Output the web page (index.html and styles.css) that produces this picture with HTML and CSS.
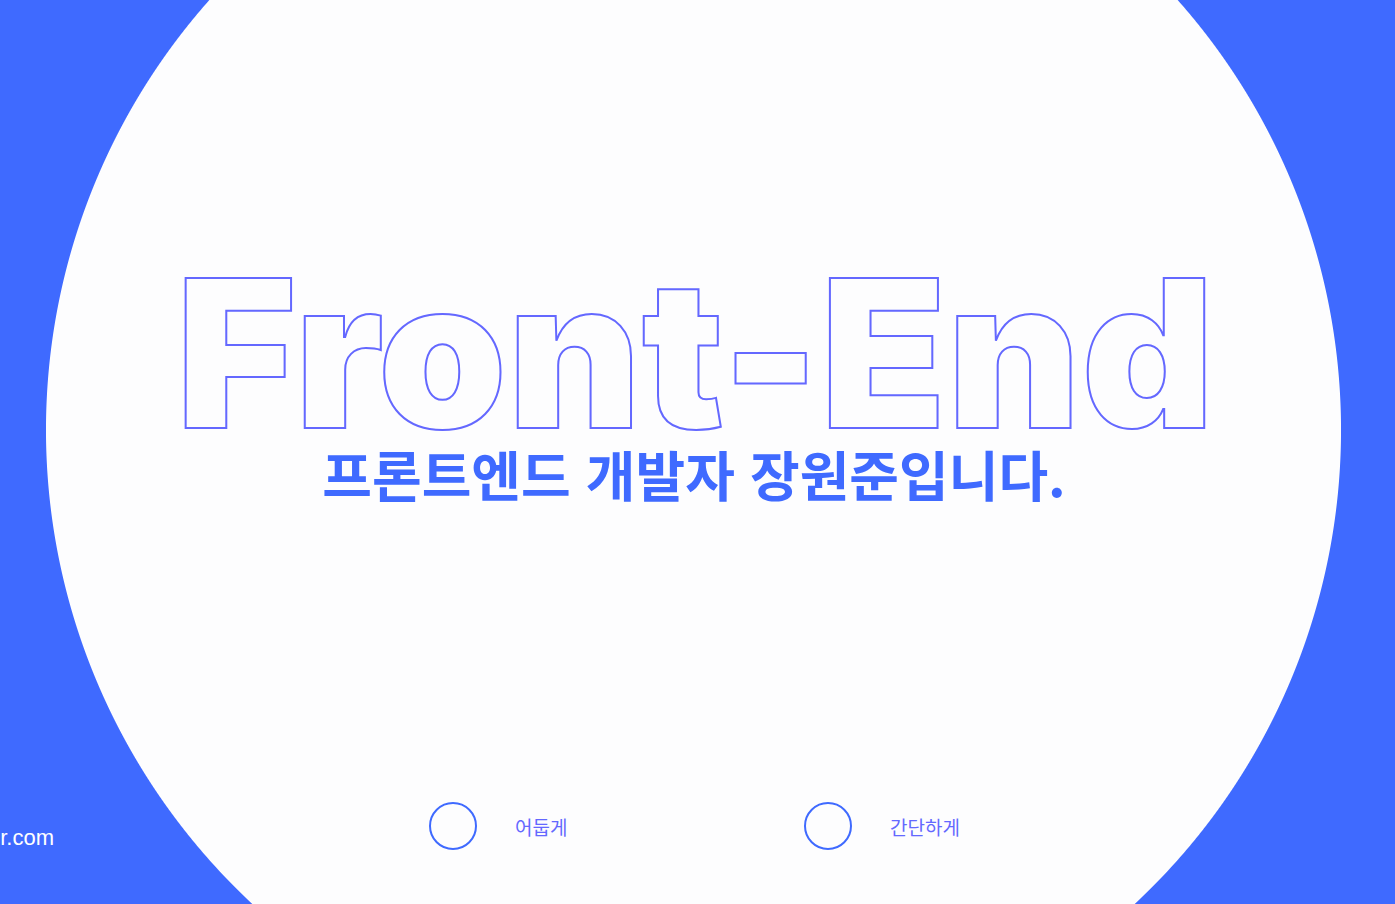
FILE: index.html
```html
<!DOCTYPE html>
<html lang="ko">
<head>
<meta charset="utf-8">
<title>Front-End</title>
<link rel="stylesheet" href="styles.css">
</head>
<body>
<main class="page">
  <section class="hero">
    <h1 class="title">Front-End</h1>
    <p class="subtitle">프론트엔드 개발자 장원준입니다.</p>
  </section>
  <footer class="footer">
    <div class="contact"><span class="email">wonjun@naver.com</span></div>
    <div class="options">
      <label class="option"><span class="radio"></span><span class="option-label">어둡게</span></label>
      <label class="option"><span class="radio"></span><span class="option-label">간단하게</span></label>
    </div>
  </footer>
</main>
</body>
</html>
```

FILE: styles.css
```css
html, body {
  margin: 0;
  padding: 0;
  height: 100%;
}
body {
  background: radial-gradient(circle 648px at 693.5px 430px, #fdfdfe 99.85%, #3f6aff 100%);
  background-color: #3f6aff;
  overflow: hidden;
  font-family: "Noto Sans CJK KR", "Noto Sans", sans-serif;
}
.page {
  width: 1395px;
  height: 904px;
  display: flex;
  flex-direction: column;
}
.hero {
  display: flex;
  flex-direction: column;
  align-items: center;
  padding-top: 265px;
}
.title {
  margin: 0;
  font-family: Inter, "Noto Sans", sans-serif;
  font-weight: 900;
  font-size: 206px;
  line-height: 177px;
  letter-spacing: 0.6px;
  color: transparent;
  -webkit-text-stroke: 2px #6468ff;
  padding-right: 4px;
}
.subtitle {
  margin: 0;
  font-family: "Noto Sans CJK KR", sans-serif;
  font-weight: 700;
  font-size: 54px;
  line-height: 1.2;
  color: #3f6aff;
  padding-right: 7px;
}
.footer {
  margin-top: auto;
  display: flex;
  align-items: flex-start;
  height: 48px;
  padding-bottom: 54px;
}
.contact {
  width: 54px;
  display: flex;
  justify-content: flex-end;
  padding-top: 23px;
}
.email {
  white-space: nowrap;
  font-family: "Liberation Sans", Arial, sans-serif;
  font-size: 22px;
  line-height: 25px;
  color: #ffffff;
}
.options {
  display: flex;
  margin-left: 375px;
}
.option {
  display: flex;
  align-items: center;
  width: 375px;
  height: 48px;
}
.radio {
  width: 44px;
  height: 44px;
  border: 2px solid #3f6aff;
  border-radius: 50%;
  box-sizing: content-box;
}
.option-label {
  margin-left: 38px;
  font-size: 19px;
  font-weight: 400;
  color: #6468ff;
}
```
